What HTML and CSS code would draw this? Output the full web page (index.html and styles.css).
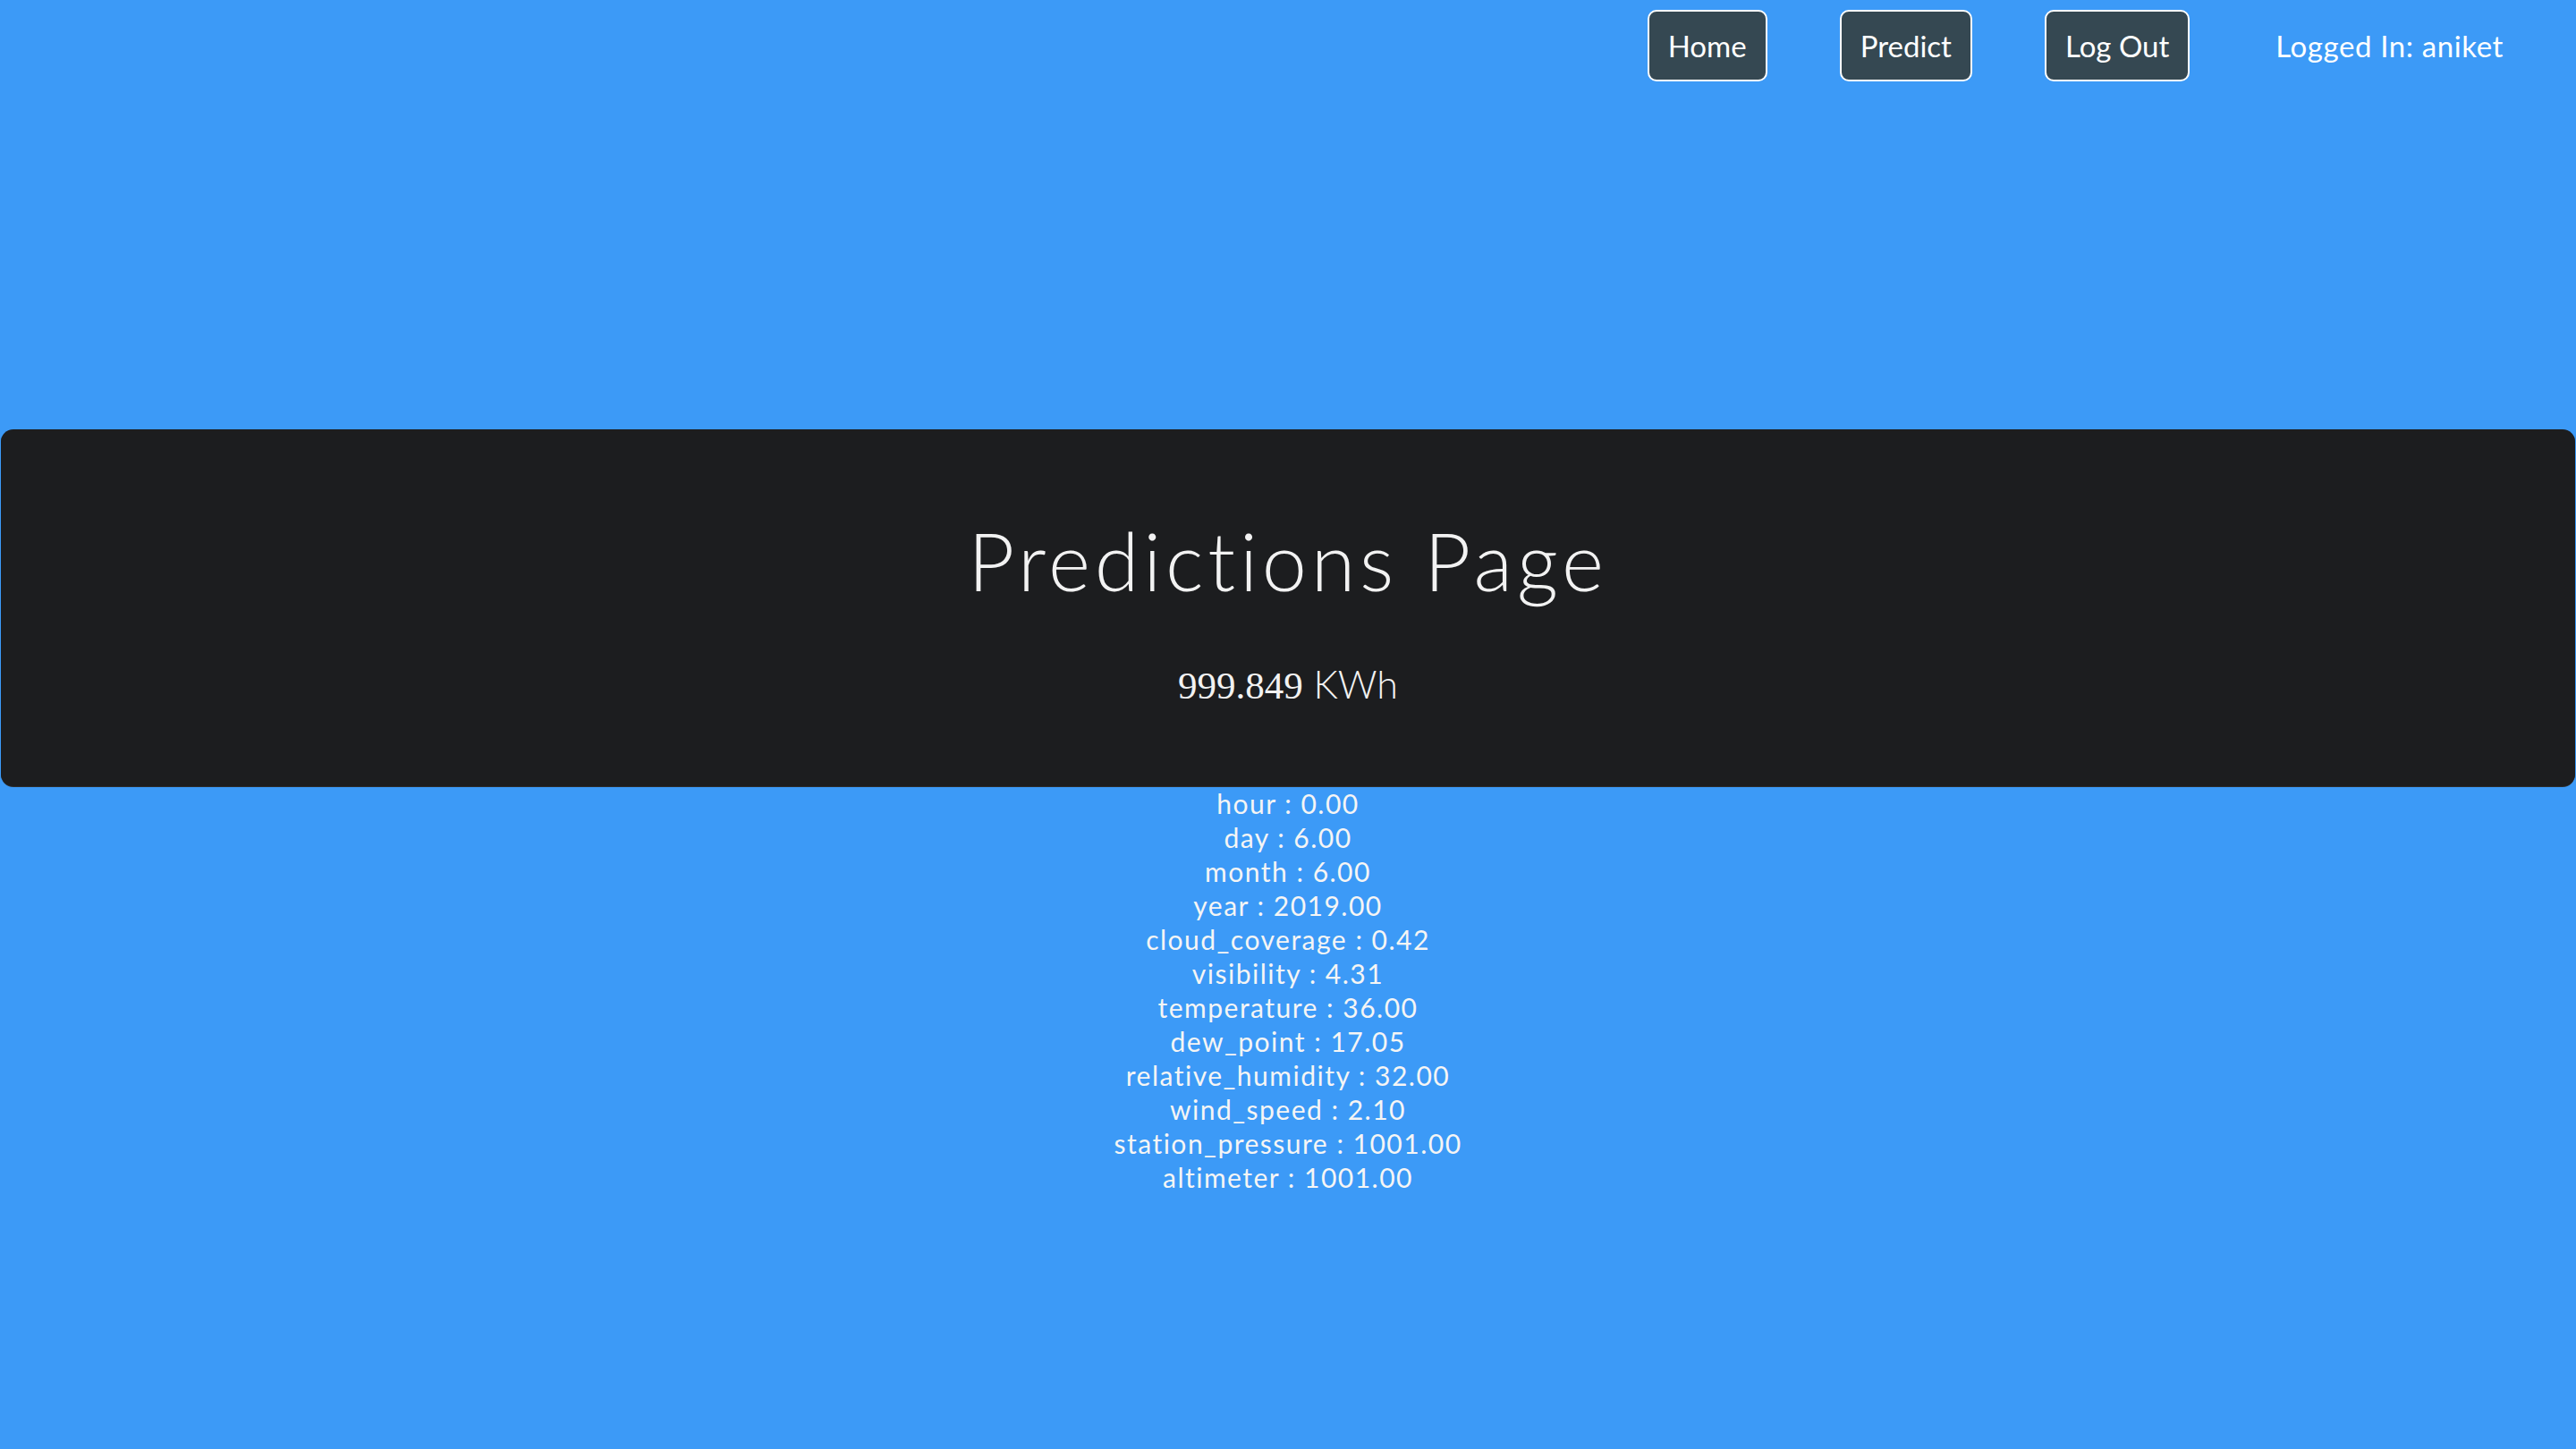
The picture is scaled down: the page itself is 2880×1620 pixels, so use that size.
FILE: index.html
```html
<!DOCTYPE html>
<html lang="en">
<head>
<meta charset="utf-8">
<title>Predictions Page</title>
<link rel="stylesheet" href="styles.css">
</head>
<body>
<nav class="topbar">
  <a class="btn" href="#">Home</a>
  <a class="btn" href="#">Predict</a>
  <a class="btn" href="#">Log Out</a>
  <span class="user">Logged In: aniket</span>
</nav>
<section class="jumbotron">
  <h1 class="title">Predictions Page</h1>
  <p class="lead"><span class="num">999.849</span> KWh</p>
</section>
<ul class="features">
  <li>hour : 0.00</li>
  <li>day : 6.00</li>
  <li>month : 6.00</li>
  <li>year : 2019.00</li>
  <li>cloud_coverage : 0.42</li>
  <li>visibility : 4.31</li>
  <li>temperature : 36.00</li>
  <li>dew_point : 17.05</li>
  <li>relative_humidity : 32.00</li>
  <li>wind_speed : 2.10</li>
  <li>station_pressure : 1001.00</li>
  <li>altimeter : 1001.00</li>
</ul>
</body>
</html>
```
FILE: styles.css
```css
html, body {
  margin: 0;
  padding: 0;
}
body {
  background: #3c9af7;
  min-height: 100vh;
  font-family: Lato, "Open Sans", sans-serif;
  font-variant-ligatures: none;
  color: #f5f5f5;
}
.topbar {
  display: flex;
  justify-content: flex-end;
  align-items: center;
  gap: 81px;
  padding: 11px 81px 0 0;
}
.btn {
  display: flex;
  align-items: center;
  box-sizing: border-box;
  height: 80px;
  padding: 0 21px;
  border: 2px solid #ffffff;
  border-radius: 10px;
  background: #354852;
  color: #ffffff;
  font-size: 33px;
  text-decoration: none;
}
.user {
  margin-left: 15px;
  font-size: 33px;
  letter-spacing: 0.6px;
  color: #ffffff;
}
.jumbotron {
  margin: 389px 1px 0 1px;
  padding: 93px 0 86px;
  background: #1c1d1f;
  border-radius: 14px;
  box-shadow: 0 1px 0 #2b2c2e;
  text-align: center;
}
.title {
  margin: 0;
  font-size: 90px;
  font-weight: 300;
  line-height: 106px;
  letter-spacing: 4.8px;
  color: #f2f2f2;
}
.lead {
  margin: 60px 0 0;
  font-size: 43px;
  line-height: 1.2;
  font-weight: 300;
  color: #f2f2f2;
}
.num {
  font-family: "Liberation Serif", serif;
  font-weight: 400;
}
.features {
  list-style: none;
  margin: 0;
  padding: 0;
  text-align: center;
  font-size: 30px;
  line-height: 38px;
  letter-spacing: 1.5px;
}
```
